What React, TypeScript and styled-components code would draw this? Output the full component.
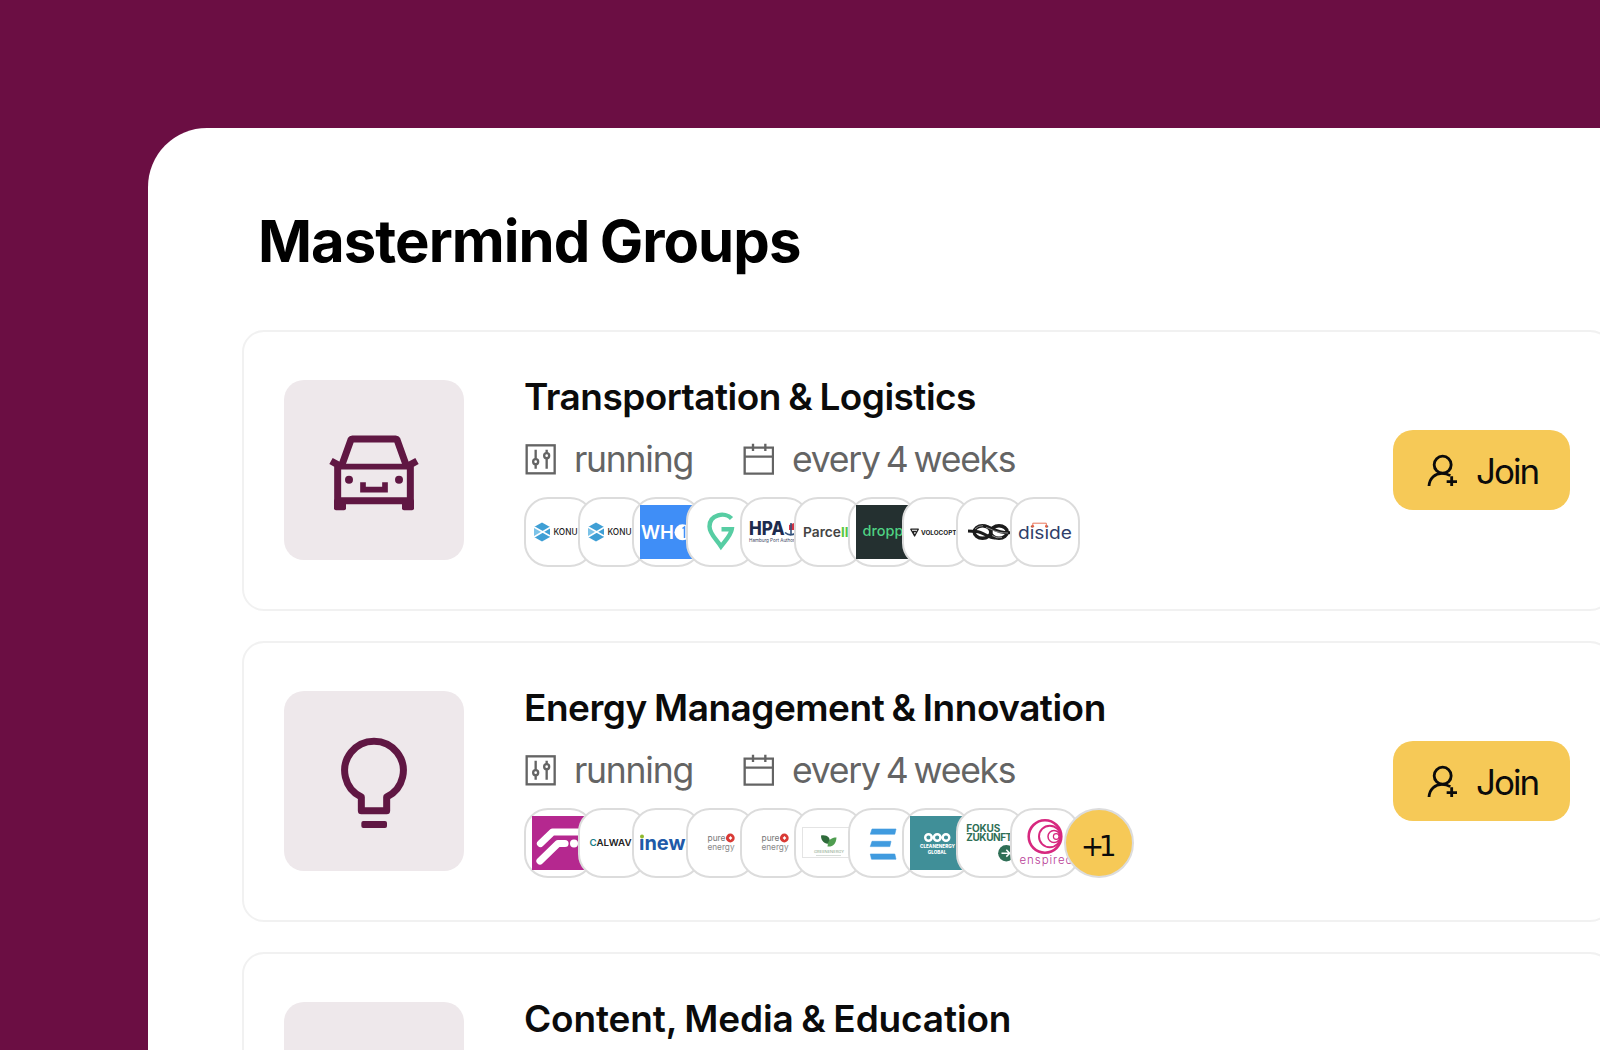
import React, { ReactNode } from 'react';
import styled, { createGlobalStyle } from 'styled-components';

const GlobalStyle = createGlobalStyle`
  * {
    box-sizing: border-box;
  }

  body {
    margin: 0;
    overflow: hidden;
    font-family: Inter, 'Liberation Sans', sans-serif;
  }
`;

const Page = styled.div`
  height: 1050px;
  padding: 128px 0 0 148px;
  overflow: hidden;
  background: #6b0e43;
`;

const Panel = styled.main`
  height: 922px;
  padding: 83px 0 0 94px;
  overflow: hidden;
  border-top-left-radius: 59px;
  background: #fff;
`;

const Heading = styled.h1`
  margin: 0 0 59px 16px;
  font-size: 58px;
  font-weight: 700;
  line-height: 60px;
  letter-spacing: -0.95px;
  word-spacing: -2.4px;
  white-space: nowrap;
  color: #000;
`;

const GroupList = styled.div`
  display: flex;
  flex-direction: column;
  gap: 30px;
  width: 1370px;
`;

const Card = styled.article`
  display: flex;
  align-items: flex-start;
  height: 281px;
  flex-shrink: 0;
  padding: 48px 40px 49px;
  border: 2px solid #f1f1f1;
  border-radius: 22px;
`;

const Tile = styled.div`
  display: flex;
  align-items: center;
  justify-content: center;
  flex-shrink: 0;
  width: 180px;
  height: 180px;
  margin-right: 60px;
  border-radius: 20px;
  background: #eee8eb;
  color: #601743;

  svg {
    overflow: visible;
  }
`;

const Details = styled.div`
  flex: 1;
`;

const GroupName = styled.h2<{ $spacing: number }>`
  margin: 0 0 28px;
  font-size: 37px;
  font-weight: 600;
  line-height: 33px;
  letter-spacing: ${({ $spacing }) => $spacing}px;
  word-spacing: -1.5px;
  white-space: nowrap;
  color: #0b0b0b;
`;

const Meta = styled.div`
  display: flex;
  margin-bottom: 20px;
`;

const MetaItem = styled.div<{ $width?: number }>`
  display: flex;
  align-items: center;
  gap: 18px;
  width: ${({ $width }) => ($width ? `${$width}px` : 'auto')};
  height: 36px;
  font-size: 35.5px;
  line-height: 36px;
  letter-spacing: -1.25px;
  word-spacing: -2.6px;
  white-space: nowrap;
  color: #646464;

  svg {
    flex-shrink: 0;
  }

  span {
    padding-top: 2px;
  }
`;

const Members = styled.div`
  display: flex;
`;

const Member = styled.div`
  flex-shrink: 0;
  width: 70px;
  height: 70px;
  padding: 6px;
  border: 2px solid #dcdcdc;
  border-radius: 24px;
  background: #fff;

  & + & {
    margin-left: -16px;
  }

  svg {
    display: block;
  }
`;

const More = styled.div`
  display: flex;
  align-items: center;
  justify-content: center;
  width: 70px;
  height: 70px;
  margin-left: -16px;
  padding: 6px 6px 0 0;
  border: 2px solid #dcdcdc;
  border-radius: 50%;
  background: #f6c957;
  font-family: 'DejaVu Sans', sans-serif;
  font-size: 28px;
  letter-spacing: -5.5px;
  color: #0b0b0b;
`;

const JoinButton = styled.button`
  display: flex;
  align-items: center;
  align-self: center;
  gap: 18px;
  width: 177px;
  height: 80px;
  margin-bottom: 1px;
  padding: 0 0 0 33px;
  border: 0;
  border-radius: 20px;
  background: #f6c957;
  font-family: inherit;
  font-size: 35px;
  line-height: 36px;
  letter-spacing: -2px;
  color: #0b0b0b;

  span {
    padding-top: 2px;
  }
`;

const CarIcon = () => (
  <svg width="90" height="90" viewBox="0 0 270 270" fill="none" stroke="currentColor" strokeWidth="21">
    <path d="M38 122L66 44Q67 42 70 42H200Q203 42 204 44L232 122" strokeLinejoin="round" />
    <path d="M26 125H244" strokeWidth="17" />
    <path d="M26 118V227H244V118M6 108L30 121M264 108L240 121" />
    <rect x="15" y="222" width="36" height="34" rx="6" fill="currentColor" stroke="none" />
    <rect x="219" y="222" width="36" height="34" rx="6" fill="currentColor" stroke="none" />
    <circle cx="60" cy="164" r="12" fill="currentColor" stroke="none" />
    <circle cx="210" cy="164" r="12" fill="currentColor" stroke="none" />
    <path d="M102 172V194H168V172" strokeWidth="17" />
  </svg>
);

const BulbIcon = () => (
  <svg width="90" height="90" viewBox="0 0 270 270" fill="none" stroke="currentColor" strokeWidth="21">
    <path d="M97 224V183A88 88 0 1 1 173 183V224Z" strokeLinejoin="round" />
    <rect x="97" y="255" width="77" height="21" rx="6" fill="currentColor" stroke="none" />
  </svg>
);

const SlidersIcon = () => (
  <svg width="32" height="32" viewBox="0 0 96 96" fill="none" stroke="currentColor" strokeWidth="7">
    <rect x="8" y="7" width="84" height="84" />
    <path d="M35 20V48M35 62V77M68 20V31M68 45V77" />
    <circle cx="35" cy="56" r="7.5" />
    <circle cx="68" cy="38" r="7.5" />
  </svg>
);

const CalendarIcon = () => (
  <svg width="32" height="32" viewBox="0 0 96 96" fill="none" stroke="currentColor" strokeWidth="7">
    <path d="M8 14H93V92H8ZM8 41H93M33 2V24M70 2V24" />
  </svg>
);

const UserPlusIcon = () => (
  <svg width="32" height="32" viewBox="0 0 96 96" fill="none" stroke="currentColor" strokeWidth="8.5">
    <circle cx="50" cy="32" r="25.5" />
    <path d="M9 97C10 72 28 58 48 58C57 58 65 60 73 65M77 67V99M62 83H93" />
  </svg>
);

interface LogoProps {
  children: ReactNode;
  bg?: string;
}

const Logo: React.FC<LogoProps> = ({ children, bg }) => (
  <Member>
    <svg width="54" height="54" viewBox="0 0 54 54" fill="none">
      {bg && <rect width="54" height="54" fill={bg} />}
      {children}
    </svg>
  </Member>
);

const Konu = () => (
  <Logo>
    <path d="M10 17.5L18 22V32L10 36.5L2 32V22Z" fill="#3f9fd5" />
    <path d="M10 27L2 22.5V31.5Z" fill="#7cc3e8" />
    <path d="M2 22L18 31M18 22.5L2 32" stroke="#fff" strokeWidth="1.5" />
    <text x="21.5" y="30.4" fontSize="8.6" fontWeight="500" textLength="24" lengthAdjust="spacingAndGlyphs" fill="#222">KONU</text>
  </Logo>
);

const PureEnergy = () => (
  <Logo>
    <text x="13.5" y="25" fontSize="8.8" textLength="18" lengthAdjust="spacingAndGlyphs" fill="#777">pure</text>
    <text x="13.5" y="33.5" fontSize="8.8" textLength="27" lengthAdjust="spacingAndGlyphs" fill="#888">energy</text>
    <circle cx="36.3" cy="22" r="4.4" fill="#d93a35" />
    <path d="M36.5 20L38.3 22L36.5 24L34.7 22Z" fill="#fff" />
  </Logo>
);

const TransportLogos = () => (
  <>
    <Konu />
    <Konu />
    <Logo bg="#3f8ef7">
      <text x="1" y="34" fontSize="18.5" fontWeight="600" textLength="33" lengthAdjust="spacingAndGlyphs" fill="#fff">WH</text>
      <circle cx="42.5" cy="27.3" r="8" fill="#fff" />
      <path d="M42.5 23.5L44.5 22V33" stroke="#3f8ef7" strokeWidth="1.5" />
    </Logo>
    <Logo>
      <path
        d="M37.5 13.5C31 6.5 15.5 9.5 15.5 21.5C15.5 29 22.5 34.5 27 41.5C32 35 37 30 37.8 24.3H27.5"
        stroke="#57cda3"
        strokeWidth="4.4"
      />
    </Logo>
    <Logo>
      <text x="1" y="30.3" fontSize="18.5" fontWeight="800" textLength="35.5" lengthAdjust="spacingAndGlyphs" fill="#1d2b4d">HPA</text>
      <path d="M41 20L46 18V25H41Z" fill="#d33444" />
      <path d="M37 27.5Q42 32 48 28M43 18V30" stroke="#33527c" strokeWidth="1.6" />
      <text x="1" y="37" fontSize="4.8" textLength="51" lengthAdjust="spacingAndGlyphs" fill="#3c4660">Hamburg Port Authority</text>
    </Logo>
    <Logo>
      <text x="1" y="32.3" fontSize="13.6" fontWeight="600" textLength="38" lengthAdjust="spacingAndGlyphs" fill="#444">Parce</text>
      <text x="39" y="32.3" fontSize="13.6" fontWeight="700" textLength="7.5" lengthAdjust="spacingAndGlyphs" fill="#57c840">ll</text>
    </Logo>
    <Logo bg="#243030">
      <text x="6.5" y="31" fontSize="14.5" fontWeight="500" textLength="41" lengthAdjust="spacingAndGlyphs" fill="#4fd283">dropp</text>
    </Logo>
    <Logo>
      <path d="M.8 24.2H8.3L4.6 31ZM4.6 31L3 26.5H6.3" stroke="#222" strokeWidth="1.3" strokeLinejoin="round" />
      <text x="11" y="29.8" fontSize="6.2" fontWeight="700" textLength="35.5" lengthAdjust="spacingAndGlyphs" fill="#222">VOLOCOPT</text>
    </Logo>
    <Logo>
      <ellipse cx="18.5" cy="27" rx="8.3" ry="6.3" stroke="#1b1b1b" strokeWidth="3.4" />
      <ellipse cx="35" cy="27" rx="8.3" ry="6.3" stroke="#1b1b1b" strokeWidth="3.4" />
      <path d="M4 26L12 26.5C20 27 24 33 31 33M20 21C28 21 31 29 48 27.5" stroke="#1b1b1b" strokeWidth="3" />
      <path d="M11 24Q14 20.5 19 20.7M28 30.5Q33 34 38 32.5M22 22.5C28 24 31 28 44 28" stroke="#bbb" strokeWidth=".7" />
    </Logo>
    <Logo>
      <text x="0" y="33.6" fontSize="17.5" textLength="54" lengthAdjust="spacingAndGlyphs" fill="#303e69">diside</text>
      <path d="M14.8 20.5V18.2H28.3V20.5" stroke="#e8765a" strokeWidth="1" />
      <circle cx="14.8" cy="21.3" r="1.3" fill="#e8603f" />
      <circle cx="28.3" cy="21.3" r="1.3" fill="#e8603f" />
    </Logo>
  </>
);

const EnergyLogos = () => (
  <>
    <Logo bg="#b5288f">
      <path d="M8.5 27.5L20.5 16H54M8 45L26 27.5H33" stroke="#fff" strokeWidth="7.2" strokeLinecap="round" strokeLinejoin="round" />
      <circle cx="42" cy="27.5" r="4" fill="#fff" />
    </Logo>
    <Logo>
      <text x="3.5" y="30" fontSize="9.5" fontWeight="600" textLength="42" lengthAdjust="spacingAndGlyphs" fill="#222">
        <tspan fill="#197d86">C</tspan>ALWAV
      </text>
    </Logo>
    <Logo>
      <text x="-1" y="34" fontSize="19.5" fontWeight="700" textLength="58" lengthAdjust="spacingAndGlyphs" fill="#2059a8">ınewa</text>
      <circle cx="2" cy="20.6" r="2" fill="#8fb82d" />
    </Logo>
    <PureEnergy />
    <PureEnergy />
    <Logo>
      <rect x=".5" y="11.5" width="53" height="30" stroke="#e4e4e4" />
      <path d="M19 19.5C25 18.5 28.5 21 28 28C22 28 19 25 19 19.5Z" fill="#2f6b3b" />
      <path d="M34.5 21.5C34 28 31 31 25.5 30.5C26 24 29 21.5 34.5 21.5Z" fill="#4f9d50" />
      <text x="12" y="37.3" fontSize="3.6" textLength="30" lengthAdjust="spacingAndGlyphs" fill="#7fa085">GREENENERGY</text>
      <path d="M14 39.5H39" stroke="#c6cfc8" strokeWidth=".7" />
    </Logo>
    <Logo>
      <path
        d="M16 13H40L38.8 18.2H14.3ZM16 25.3H35L33.8 30.6H14.3ZM14.3 38H38.8L40 43.2H15.5Z"
        fill="#409bdf"
        stroke="#409bdf"
        strokeWidth=".6"
        strokeLinejoin="round"
      />
    </Logo>
    <Logo bg="#408f98">
      <circle cx="18.5" cy="21.5" r="3.3" stroke="#fff" strokeWidth="2.4" />
      <circle cx="27.2" cy="21.5" r="3.3" stroke="#fff" strokeWidth="2.4" />
      <circle cx="36" cy="21.5" r="3.3" stroke="#fff" strokeWidth="2.4" />
      <path d="M20.5 21.5H25M29.5 21.5H34" stroke="#fff" strokeWidth="2" />
      <text x="10" y="32.2" fontSize="4.7" fontWeight="800" textLength="35" lengthAdjust="spacingAndGlyphs" fill="#fff">CLEANENERGY</text>
      <text x="17.8" y="37.6" fontSize="4.7" fontWeight="800" textLength="18.5" lengthAdjust="spacingAndGlyphs" fill="#fff">GLOBAL</text>
    </Logo>
    <Logo>
      <text x="2.3" y="15.7" fontSize="10" fontWeight="700" textLength="34" lengthAdjust="spacing" fill="#2f6f56">FOKUS</text>
      <text x="2.3" y="25.4" fontSize="10" fontWeight="700" textLength="46" lengthAdjust="spacing" fill="#2f6f56">ZUKUNFT</text>
      <circle cx="42.3" cy="37.2" r="8.2" fill="#2f6f56" />
      <path d="M37.5 37.2H45.5M42.3 33.8L45.7 37.2L42.3 40.6" stroke="#fff" strokeWidth="1.5" />
    </Logo>
    <Logo>
      <circle cx="27" cy="20.5" r="16.3" stroke="#d7287f" strokeWidth="2.6" />
      <circle cx="31.8" cy="20.5" r="10.8" stroke="#d7287f" strokeWidth="2" />
      <circle cx="36" cy="20.5" r="6" stroke="#d7287f" strokeWidth="1.5" />
      <circle cx="38.2" cy="20.5" r="2.8" stroke="#d7287f" strokeWidth="1.2" />
      <text x="1.5" y="48.3" fontSize="11.5" fontWeight="300" textLength="53" lengthAdjust="spacing" fill="#b83c96">enspired</text>
    </Logo>
    <More>+1</More>
  </>
);

interface Group {
  name: string;
  spacing: number;
  icon?: ReactNode;
  members?: ReactNode;
}

const groups: Group[] = [
  { name: 'Transportation & Logistics', spacing: -0.53, icon: <CarIcon />, members: <TransportLogos /> },
  { name: 'Energy Management & Innovation', spacing: -0.5, icon: <BulbIcon />, members: <EnergyLogos /> },
  { name: 'Content, Media & Education', spacing: -0.14 },
];

const GroupCard: React.FC<{ group: Group }> = ({ group }) => (
  <Card>
    <Tile>{group.icon}</Tile>
    <Details>
      <GroupName $spacing={group.spacing}>{group.name}</GroupName>
      <Meta>
        <MetaItem $width={218}>
          <SlidersIcon />
          <span>running</span>
        </MetaItem>
        <MetaItem>
          <CalendarIcon />
          <span>every 4 weeks</span>
        </MetaItem>
      </Meta>
      <Members>{group.members}</Members>
    </Details>
    <JoinButton type="button">
      <UserPlusIcon />
      <span>Join</span>
    </JoinButton>
  </Card>
);

const App = () => (
  <>
    <GlobalStyle />
    <Page>
      <Panel>
        <Heading>Mastermind Groups</Heading>
        <GroupList>
          {groups.map((group) => (
            <GroupCard key={group.name} group={group} />
          ))}
        </GroupList>
      </Panel>
    </Page>
  </>
);

export default App;
